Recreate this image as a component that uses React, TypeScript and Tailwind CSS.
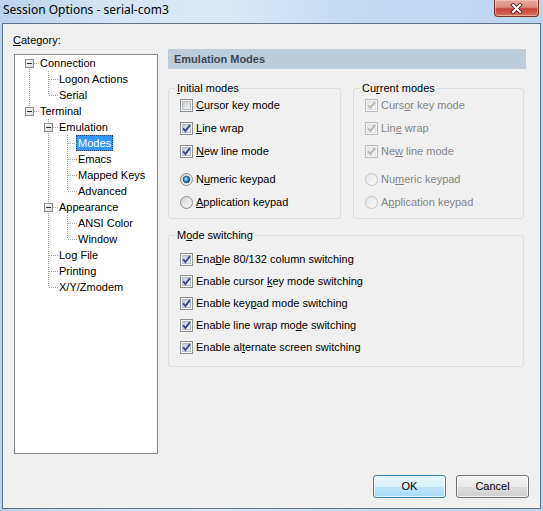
import React, { useId } from 'react';

const ui = "font-['Liberation_Sans',Arial,sans-serif] text-[11px] leading-[13px]";

function svgId(raw: string) {
  return 'g' + raw.replace(/[^a-zA-Z0-9]/g, '');
}

function Mnemonic({ text }: { text: string }) {
  const i = text.indexOf('&');
  if (i < 0) return <>{text}</>;
  return (
    <>
      {text.slice(0, i)}
      <span className="underline underline-offset-[1px]">{text[i + 1]}</span>
      {text.slice(i + 2)}
    </>
  );
}

function CheckBox({ checked, disabled }: { checked: boolean; disabled?: boolean }) {
  const id = svgId(useId());
  return (
    <svg width="13" height="13" viewBox="0 0 13 13" className="shrink-0">
      <defs>
        <linearGradient id={id} x1="0" y1="0" x2="1" y2="1">
          <stop offset="0" stopColor={disabled ? '#e4e4e4' : '#c6cbd2'} />
          <stop offset="1" stopColor={disabled ? '#f7f7f7' : '#f4f4f5'} />
        </linearGradient>
      </defs>
      <rect x="0.5" y="0.5" width="12" height="12" fill="#f6f6f6" stroke={disabled ? '#bcbcbc' : '#8e8f8f'} />
      <rect x="2.5" y="2.5" width="8" height="8" fill={`url(#${id})`} stroke={disabled ? '#e0e0e0' : '#b5bac1'} />
      {checked && (
        <path
          d="M3.2 6.4l2.2 2.6L9.9 3.1"
          fill="none"
          stroke={disabled ? '#b8b8b8' : '#34458a'}
          strokeWidth="1.8"
        />
      )}
    </svg>
  );
}

function Radio({ checked, disabled }: { checked: boolean; disabled?: boolean }) {
  const id = svgId(useId());
  return (
    <svg width="13" height="13" viewBox="0 0 13 13" className="shrink-0">
      <defs>
        <linearGradient id={id + 'a'} x1="0" y1="0" x2="1" y2="1">
          <stop offset="0" stopColor={disabled ? '#e6e6e6' : '#cfd3d8'} />
          <stop offset="1" stopColor="#f8f8f8" />
        </linearGradient>
        <radialGradient id={id + 'b'} cx="0.4" cy="0.4" r="0.6">
          <stop offset="0" stopColor="#b9ecff" />
          <stop offset="0.5" stopColor="#3c9ad8" />
          <stop offset="1" stopColor="#124f8c" />
        </radialGradient>
      </defs>
      <circle cx="6.5" cy="6.5" r="6" fill={`url(#${id}a)`} stroke={disabled ? '#c4c4c4' : '#8e8f8f'} />
      {checked && <circle cx="6.5" cy="6.5" r="3.3" fill={`url(#${id}b)`} stroke="#1b3f6a" strokeWidth="0.8" />}
    </svg>
  );
}

type Opt = { label: string; kind: 'check' | 'radio'; on: boolean; gap?: boolean };

function OptionRow({ o, disabled, h }: { o: Opt; disabled?: boolean; h: string }) {
  return (
    <div className={`flex items-center gap-[3px] ${h} ${o.gap ? 'mt-[5px]' : ''}`}>
      {o.kind === 'check' ? <CheckBox checked={o.on} disabled={disabled} /> : <Radio checked={o.on} disabled={disabled} />}
      <span className={disabled ? 'text-[#858585]' : 'text-black'}>
        <Mnemonic text={o.label} />
      </span>
    </div>
  );
}

const initialModes: Opt[] = [
  { label: '&Cursor key mode', kind: 'check', on: false },
  { label: '&Line wrap', kind: 'check', on: true },
  { label: '&New line mode', kind: 'check', on: true },
  { label: 'N&umeric keypad', kind: 'radio', on: true, gap: true },
  { label: '&Application keypad', kind: 'radio', on: false },
];

const currentModes: Opt[] = [
  { label: 'Curs&or key mode', kind: 'check', on: true },
  { label: 'Lin&e wrap', kind: 'check', on: true },
  { label: 'Ne&w line mode', kind: 'check', on: true },
  { label: 'Nu&meric keypad', kind: 'radio', on: false, gap: true },
  { label: 'A&pplication keypad', kind: 'radio', on: false },
];

const switching: Opt[] = [
  { label: 'Ena&ble 80/132 column switching', kind: 'check', on: true },
  { label: 'Enable cursor &key mode switching', kind: 'check', on: true },
  { label: 'Enable key&pad mode switching', kind: 'check', on: true },
  { label: 'Enable line wrap mo&de switching', kind: 'check', on: true },
  { label: 'Enable al&ternate screen switching', kind: 'check', on: true },
];

function Group({ title, width, className, children }: { title: string; width: string; className?: string; children: React.ReactNode }) {
  return (
    <fieldset className={`${width} border border-[#d5dfe5] rounded-[3px] pl-[11px] ${className ?? ''}`}>
      <legend className="-ml-[5px] px-[2px] leading-[13px]">
        <Mnemonic text={title} />
      </legend>
      {children}
    </fieldset>
  );
}

type Node = { label: string; children?: Node[]; selected?: boolean };

const tree: Node[] = [
  { label: 'Connection', children: [{ label: 'Logon Actions' }, { label: 'Serial' }] },
  {
    label: 'Terminal',
    children: [
      {
        label: 'Emulation',
        children: [{ label: 'Modes', selected: true }, { label: 'Emacs' }, { label: 'Mapped Keys' }, { label: 'Advanced' }],
      },
      { label: 'Appearance', children: [{ label: 'ANSI Color' }, { label: 'Window' }] },
      { label: 'Log File' },
      { label: 'Printing' },
      { label: 'X/Y/Zmodem' },
    ],
  },
];

type Flat = { node: Node; level: number; ancestorsNext: boolean[]; hasNext: boolean; first: boolean };

function flatten(nodes: Node[], level: number, anc: boolean[], out: Flat[]) {
  nodes.forEach((n, i) => {
    const hasNext = i < nodes.length - 1;
    out.push({ node: n, level, ancestorsNext: anc, hasNext, first: level === 0 && i === 0 });
    if (n.children) flatten(n.children, level + 1, [...anc, hasNext], out);
  });
  return out;
}

const dot = { stroke: '#a0a0a0', strokeDasharray: '1 1' };

function GuideCell({ kind, box, top, bottom }: { kind: 'pass' | 'own' | 'none'; box?: boolean; top?: boolean; bottom?: boolean }) {
  return (
    <svg width="19" height="16" viewBox="0 0 19 16" className="shrink-0" shapeRendering="crispEdges">
      {kind === 'pass' && <line x1="9.5" y1="0" x2="9.5" y2="16" {...dot} />}
      {kind === 'own' && (
        <>
          {top && <line x1="9.5" y1="0" x2="9.5" y2="8" {...dot} />}
          {bottom && <line x1="9.5" y1="8" x2="9.5" y2="16" {...dot} />}
          <line x1={box ? 14 : 10} y1="8.5" x2="19" y2="8.5" {...dot} />
          {box && (
            <>
              <defs>
                <linearGradient id="tvbox" x1="0" y1="0" x2="1" y2="1">
                  <stop offset="0" stopColor="#ffffff" />
                  <stop offset="1" stopColor="#d6d6d6" />
                </linearGradient>
              </defs>
              <rect x="5.5" y="4.5" width="8" height="8" fill="url(#tvbox)" stroke="#8d8d8d" />
              <line x1="7" y1="8.5" x2="12" y2="8.5" stroke="#2b2b2b" />
            </>
          )}
        </>
      )}
    </svg>
  );
}

function TreeView() {
  const rows = flatten(tree, 0, [], []);
  return (
    <div className="ml-[1px] mt-[7px] w-[144px] h-[400px] border border-[#828790] bg-white pl-[5px]">
      {rows.map((r) => (
        <div key={r.node.label} className="flex h-[16px] items-center">
          {r.ancestorsNext.map((a, i) => (
            <GuideCell key={i} kind={a ? 'pass' : 'none'} />
          ))}
          <GuideCell kind="own" box={!!r.node.children} top={!r.first} bottom={r.hasNext} />
          <span
            className={`-ml-[1px] px-[1px] h-[16px] leading-[15px] whitespace-nowrap border ${
              r.node.selected ? 'bg-[#3399ff] text-white border-dotted border-[#1c3f75]' : 'border-transparent text-black'
            }`}
          >
            {r.node.label}
          </span>
        </div>
      ))}
    </div>
  );
}

function CloseButton() {
  return (
    <div className="mr-[4px] flex h-[17px] w-[45px] items-center justify-center rounded-b-[4px] border border-t-0 border-[#7d3327] bg-[linear-gradient(to_bottom,#e9ab9c_0%,#db8d7c_45%,#c4473a_55%,#cf5f4b_85%,#e08a6e_100%)] shadow-[inset_0_0_0_1px_rgba(255,220,210,0.45)]">
      <svg width="13" height="11" viewBox="0 0 13 11">
        <path d="M3 2l7 7M10 2L3 9" stroke="#4a1d16" strokeWidth="3.6" strokeLinecap="square" />
        <path d="M3 2l7 7M10 2L3 9" stroke="#ffffff" strokeWidth="2" strokeLinecap="square" />
      </svg>
    </div>
  );
}

export default function App() {
  return (
    <div className={`w-[543px] h-[511px] flex flex-col bg-[linear-gradient(to_right,#b9d2ee_0%,#d2e4f6_20%,#dbe9f7_40%,#c4dbf2_65%,#bcd5ef_100%)] ${ui}`}>
      <div className="flex h-[23px] shrink-0 items-start justify-between">
        <span className="mt-[2px] pl-[3px] font-['Noto_Sans',sans-serif] text-[12px] leading-[16px] text-black">
          Session Options - serial-com3
        </span>
        <CloseButton />
      </div>

      <div className="mx-[2px] mb-[2px] flex flex-1 flex-col border border-[#5f7286] bg-[#f0f0f0] text-black">
        <div className="flex">
          <div className="pl-[10px] pt-[10px]">
            <div className="leading-[13px]">
              <Mnemonic text="&Category:" />
            </div>
            <TreeView />
          </div>

          <div className="ml-[10px] w-[358px] pt-[25px]">
            <div className="flex h-[20px] items-center bg-[#bfcddb] pl-[6px] font-bold text-[#3b4856]">
              Emulation Modes
            </div>

            <div className="mt-[13px] flex w-[356px] gap-[12px]">
              <Group title="&Initial modes" width="w-[173px]" className="pb-[4px]">
                <div className="-mt-[1px]">
                  {initialModes.map((o) => (
                    <OptionRow key={o.label} o={o} h="h-[23px]" />
                  ))}
                </div>
              </Group>
              <Group title="Cu&rrent modes" width="w-[171px]" className="pb-[4px]">
                <div className="-mt-[1px]">
                  {currentModes.map((o) => (
                    <OptionRow key={o.label} o={o} disabled h="h-[23px]" />
                  ))}
                </div>
              </Group>
            </div>

            <Group title="M&ode switching" width="w-[356px]" className="mt-[10px] pt-[6px] pb-[8px]">
              {switching.map((o) => (
                <OptionRow key={o.label} o={o} h="h-[22px]" />
              ))}
            </Group>
          </div>
        </div>

        <div className="mt-auto flex justify-end gap-[10px] pb-[10px] pr-[11px]">
          <button className="h-[23px] w-[73px] rounded-[3px] border border-[#3c7fb1] bg-[linear-gradient(to_bottom,#eaf6fd_0%,#d9f0fc_50%,#bee6fd_51%,#a7d9f5_100%)] text-black shadow-[inset_0_0_0_1px_rgba(255,255,255,0.7)]">
            OK
          </button>
          <button className="h-[23px] w-[73px] rounded-[3px] border border-[#707070] bg-[linear-gradient(to_bottom,#f2f2f2_0%,#ebebeb_50%,#dddddd_51%,#cfcfcf_100%)] text-black shadow-[inset_0_0_0_1px_rgba(255,255,255,0.7)]">
            Cancel
          </button>
        </div>
      </div>
    </div>
  );
}
